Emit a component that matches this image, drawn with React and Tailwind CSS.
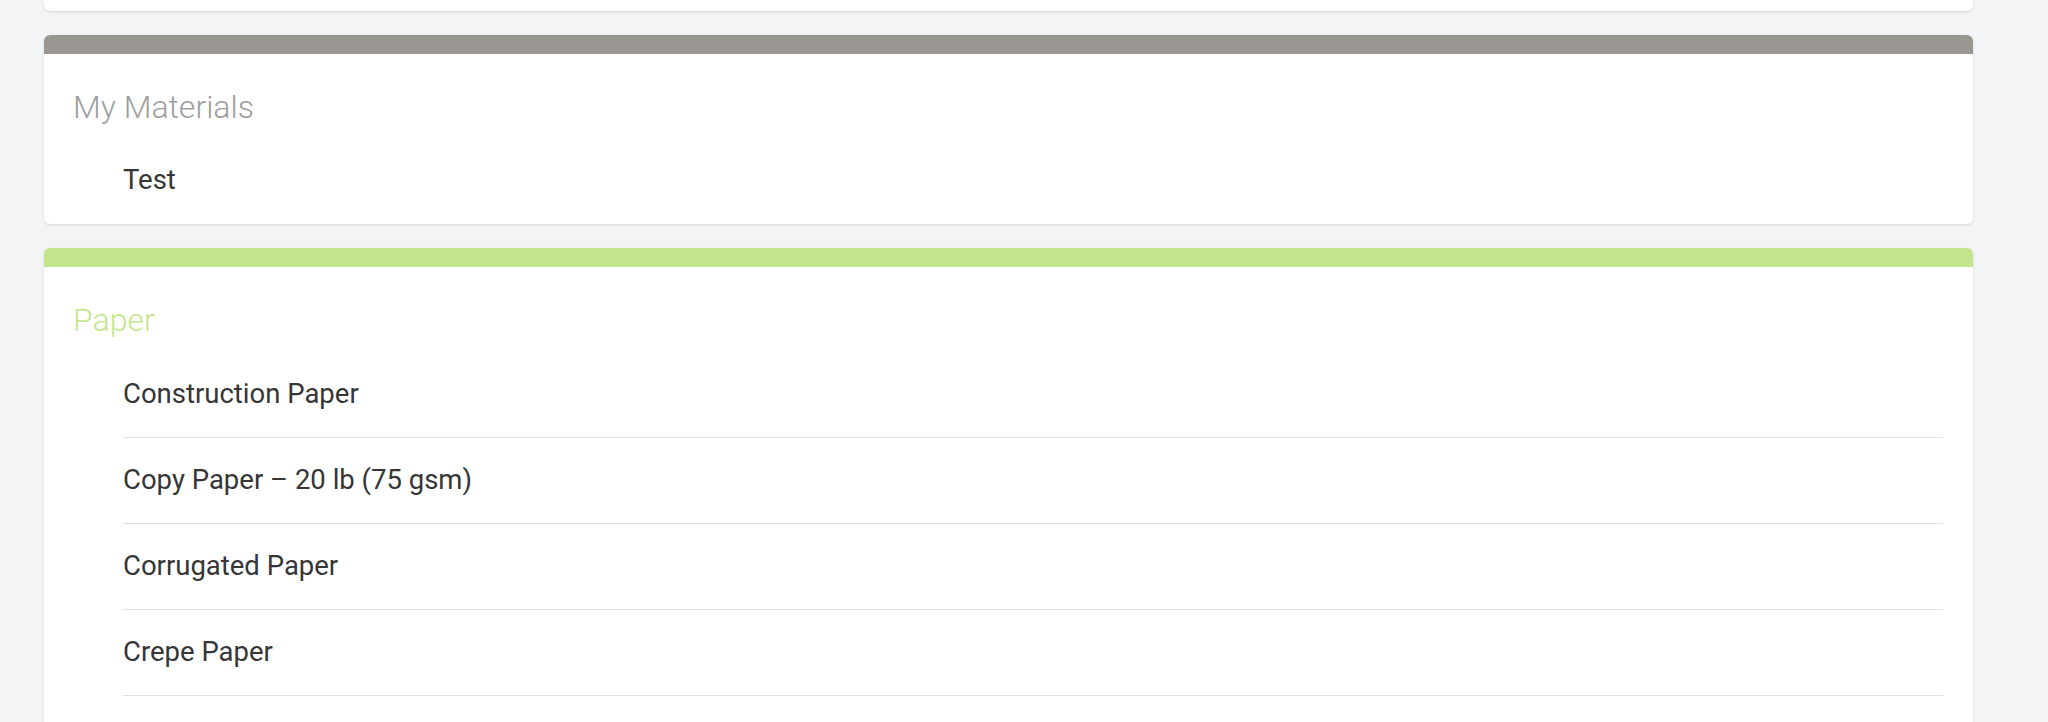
export default function App() {
  const paper = [
    "Construction Paper",
    "Copy Paper – 20 lb (75 gsm)",
    "Corrugated Paper",
    "Crepe Paper",
  ];
  return (
    <div
      className="h-[722px] overflow-hidden bg-[#f3f4f6] pl-[44px] pr-[75px]"
      style={{ fontFamily: "Roboto, 'Liberation Sans', sans-serif" }}
    >
      <div className="flex h-[746px] flex-col gap-[24px]">
        <div className="h-[11px] shrink-0 rounded-b-[6px] bg-white shadow-[0_1px_3px_rgba(0,0,0,0.12)]" />

        <div className="shrink-0 overflow-hidden rounded-[6px] bg-white shadow-[0_1px_3px_rgba(0,0,0,0.12)]">
          <div className="h-[19px] bg-[#9a9692]" />
          <div className="px-[29px] pt-[33px] pb-[11px]">
            <h2 className="text-[32px] font-light leading-[40px] text-[#9e9e9e]">My Materials</h2>
          </div>
          <ul className="pl-[79px] pr-[30px]">
            <li className="pt-[24px] pb-[26px] text-[27.5px] leading-[36px] text-[#363636]">Test</li>
          </ul>
        </div>

        <div className="flex-1 overflow-hidden rounded-[6px] bg-white shadow-[0_1px_3px_rgba(0,0,0,0.12)]">
          <div className="h-[19px] bg-[#c3e68c]" />
          <div className="px-[29px] pt-[33px] pb-[12px]">
            <h2 className="text-[32px] font-light leading-[40px] text-[#c3e68c]">Paper</h2>
          </div>
          <ul className="pl-[79px] pr-[30px]">
            {paper.map((p) => (
              <li
                key={p}
                className="border-b border-[#e0e0e0] pt-[24px] pb-[25px] text-[27.5px] leading-[36px] text-[#363636]"
              >
                {p}
              </li>
            ))}
          </ul>
        </div>
      </div>
    </div>
  );
}
